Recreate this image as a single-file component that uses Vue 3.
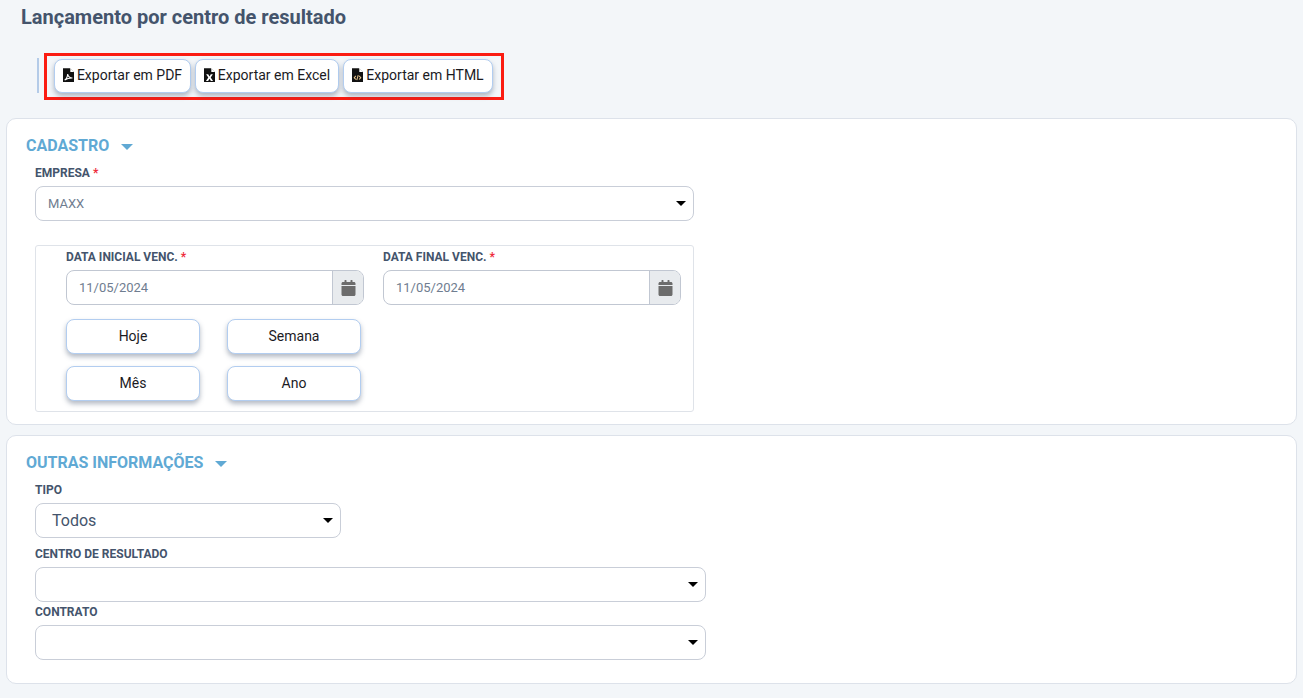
<template>
  <div class="page">
    <h1 class="title">Lançamento por centro de resultado</h1>

    <div class="toolbar">
      <span class="sep"></span>
      <div class="export-box">
        <button v-for="b in exportButtons" :key="b.label" class="btn export" :style="{ width: b.width + 'px' }">
          <svg class="file-ico" viewBox="0 0 12 15">
            <path d="M0 0h7.500L12 4.500V15H0z" fill="#111" />
            <path d="M8 0.300v3.900h3.900z" fill="#fff" />
            <path v-if="b.kind === 'pdf'" d="M1.800 13c1.800-1 3-3.400 3.300-6.500.5 2.600 2 4.200 5.200 4.200-3-.1-6 .6-8.500 2.300z" fill="none" stroke="#fff" stroke-width="1.100" />
            <path v-if="b.kind === 'xls'" d="M2.300 6.800h2.300l1.400 2.200 1.400-2.200h2.300L7.300 10.300l2.600 3.700H7.500L6 11.700 4.500 14H2.100l2.600-3.700z" fill="#fff" />
            <path v-if="b.kind === 'html'" d="M4.200 8.400L2.400 10.400l1.800 2M7.800 8.400l1.800 2-1.800 2M6.800 7.600l-1.600 5.600" fill="none" stroke="#eac78e" stroke-width="1.100" />
          </svg>
          {{ b.label }}
        </button>
      </div>
    </div>

    <section class="card first">
      <h2 class="section-title">CADASTRO <span class="section-caret"></span></h2>
      <div class="fields">
        <label class="lbl">EMPRESA <em>*</em></label>
        <div class="select muted-value w-main">
          <span>MAXX</span>
          <i class="caret"></i>
        </div>

        <div class="date-box">
          <div class="date-grid">
            <div v-for="d in dates" :key="d" class="date-col">
              <label class="lbl">{{ d }} <em>*</em></label>
              <div class="input-group">
                <span class="date-value">11/05/2024</span>
                <span class="addon">
                  <svg viewBox="0 0 448 512" class="cal">
                    <path d="M0 464c0 26.500 21.500 48 48 48h352c26.500 0 48-21.500 48-48V192H0v272zM400 64h-48V16c0-8.800-7.200-16-16-16h-32c-8.800 0-16 7.200-16 16v48H160V16c0-8.800-7.200-16-16-16h-32c-8.800 0-16 7.200-16 16v48H48C21.500 64 0 85.500 0 112v48h448v-48c0-26.500-21.500-48-48-48z" fill="#6c6c6c" />
                  </svg>
                </span>
              </div>
            </div>
          </div>
          <div class="quick-grid">
            <button v-for="q in quickButtons" :key="q" class="btn quick">{{ q }}</button>
          </div>
        </div>
      </div>
    </section>

    <section class="card second">
      <h2 class="section-title">OUTRAS INFORMAÇÕES <span class="section-caret"></span></h2>
      <div class="fields">
        <label class="lbl">TIPO</label>
        <div class="select big-value w-tipo">
          <span>Todos</span>
          <i class="caret"></i>
        </div>
        <label class="lbl next">CENTRO DE RESULTADO</label>
        <div class="select w-wide"><span></span><i class="caret"></i></div>
        <label class="lbl next contrato">CONTRATO</label>
        <div class="select w-wide"><span></span><i class="caret"></i></div>
      </div>
    </section>
  </div>
</template>

<script setup>
const exportButtons = [
  { label: 'Exportar em PDF', kind: 'pdf', width: 137 },
  { label: 'Exportar em Excel', kind: 'xls', width: 144 },
  { label: 'Exportar em HTML', kind: 'html', width: 150 },
]
const dates = ['DATA INICIAL VENC.', 'DATA FINAL VENC.']
const quickButtons = ['Hoje', 'Semana', 'Mês', 'Ano']
</script>

<style>
html, body {
  margin: 0;
  background: #f3f6f9;
}
</style>

<style scoped>
.page {
  height: 698px;
  overflow: hidden;
  box-sizing: border-box;
  padding: 0 6px;
  font-family: Roboto, "Liberation Sans", sans-serif;
  background: #f3f6f9;
}
.title {
  margin: 0 0 0 15px;
  padding-top: 6px;
  font-size: 20px;
  line-height: 22px;
  font-weight: 700;
  color: #44546c;
}
.toolbar {
  display: flex;
  align-items: flex-start;
  margin: 25px 0 0 31px;
  height: 47px;
}
.sep {
  width: 2px;
  height: 35px;
  margin-top: 5px;
  background: #b4cbe8;
  margin-right: 5px;
}
.export-box {
  display: flex;
  box-sizing: border-box;
  width: 460px;
  height: 47px;
  padding: 3px 7px;
  gap: 4px;
  border: 3px solid #fb1c12;
  align-items: flex-start;
}
.btn {
  box-sizing: border-box;
  background: #fff;
  border: 1px solid #b2cdf0;
  border-radius: 8px;
  box-shadow: 0 3px 5px rgba(70, 85, 110, 0.4);
  font-family: inherit;
  font-size: 14px;
  color: #1b1b1f;
  padding: 0 0 2px;
}
.export {
  height: 34px;
  display: flex;
  align-items: center;
  justify-content: center;
  gap: 3px;
}
.file-ico {
  width: 11px;
  height: 14px;
}
.card {
  box-sizing: border-box;
  background: #fff;
  border: 1px solid #dde2ea;
  border-radius: 10px;
  padding: 0 19px;
}
.first {
  margin-top: 18px;
  height: 307px;
}
.second {
  margin-top: 10px;
  height: 249px;
}
.section-title {
  margin: 0;
  padding-top: 17px;
  font-size: 16px;
  line-height: 19px;
  font-weight: 700;
  color: #60a9d4;
  display: flex;
  align-items: center;
}
.section-caret {
  display: inline-block;
  margin-left: 12px;
  margin-top: 2px;
  border-left: 6px solid transparent;
  border-right: 6px solid transparent;
  border-top: 6px solid #60a9d4;
}
.fields {
  padding-left: 9px;
  margin-top: 11px;
}
.lbl {
  display: block;
  font-size: 12px;
  line-height: 14px;
  font-weight: 700;
  color: #44546c;
  margin-bottom: 6px;
}
.lbl em {
  font-style: normal;
  color: #ee2b3a;
}
.lbl.next {
  margin-top: 9px;
}
.lbl.contrato {
  margin-top: 3px;
}
.select {
  box-sizing: border-box;
  height: 35px;
  display: flex;
  align-items: center;
  justify-content: space-between;
  border: 1px solid #c9ced8;
  border-radius: 8px;
  background: #fff;
  padding: 0 7px 0 12px;
}
.w-main { width: 659px; }
.w-tipo { width: 306px; padding-left: 16px; }
.w-wide { width: 671px; }
.muted-value {
  font-size: 13px;
  color: #6f7d90;
}
.big-value {
  font-size: 16px;
  color: #44546c;
}
.caret {
  width: 0;
  height: 0;
  border-left: 5.500px solid transparent;
  border-right: 5.500px solid transparent;
  border-top: 5px solid #000;
}
.date-box {
  box-sizing: border-box;
  width: 659px;
  height: 167px;
  margin-top: 24px;
  border: 1px solid #dfe3e9;
  border-radius: 3px;
  padding: 4px 12px 0 30px;
}
.date-grid {
  display: grid;
  grid-template-columns: 298px 298px;
  column-gap: 19px;
}
.input-group {
  box-sizing: border-box;
  height: 35px;
  display: flex;
  align-items: center;
  justify-content: space-between;
  border: 1px solid #c1c7d2;
  border-radius: 8px;
  overflow: hidden;
}
.date-value {
  padding-left: 12px;
  font-size: 13px;
  color: #6f7d90;
}
.addon {
  width: 30px;
  height: 100%;
  display: flex;
  align-items: center;
  justify-content: center;
  background: #e8ebee;
  border-left: 1px solid #c1c7d2;
}
.cal {
  width: 15px;
  height: 16px;
}
.quick-grid {
  display: grid;
  grid-template-columns: 134px 134px;
  column-gap: 27px;
  row-gap: 12px;
  margin-top: 14px;
}
.quick {
  height: 35px;
}
</style>
